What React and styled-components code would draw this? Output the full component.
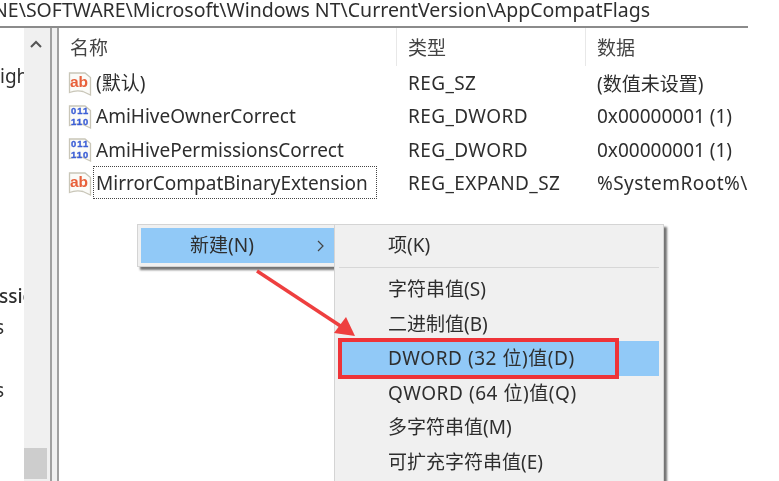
import React from "react";
import styled, { createGlobalStyle } from "styled-components";

const Global = createGlobalStyle`
  html, body { margin: 0; padding: 0; background: #fff; }
  body { font-family: "Noto Sans", "Noto Sans CJK SC", sans-serif; }
`;

const Stage = styled.div`
  position: relative;
  width: 779px;
  height: 481px;
  overflow: hidden;
  background: #fff;
  color: #2e2e2e;
  font-size: 19px;
  filter: blur(0.6px);
`;

const PathBar = styled.div`
  width: 748px;
  height: 28px;
  box-sizing: border-box;
  border-bottom: 2px solid #8b8b8b;
  display: flex;
  justify-content: flex-end;
  align-items: center;
  white-space: nowrap;
  overflow: hidden;
  font-size: 19.5px;
  line-height: 20px;
  padding: 0 98px 7px 0;
`;

const Panes = styled.div`
  display: flex;
  height: 453px;
`;

const Tree = styled.div`
  width: 50px;
  flex: none;
  display: flex;
  border-right: 2px solid #a0a0a0;
`;

const TreeLabels = styled.div`
  width: 24px;
  flex: none;
  overflow: hidden;
  padding-top: 33px;
  display: flex;
  flex-direction: column;
`;

const TreeRow = styled.div`
  height: 31.4px;
  flex: none;
  line-height: 31.4px;
  white-space: nowrap;
  margin-left: ${(p) => p.$x || 0}px;
  font-weight: ${(p) => (p.$bold ? 500 : 400)};
`;

const ScrollBar = styled.div`
  width: 26px;
  flex: none;
  background: #f0f0f0;
  display: flex;
  flex-direction: column;
  justify-content: space-between;
`;

const ScrollUp = styled.div`
  height: 36px;
  display: flex;
  justify-content: center;
  padding: 12px 3px 0 0;
  box-sizing: border-box;
`;

const ScrollThumb = styled.div`
  width: 23px;
  height: 31px;
  margin-bottom: 2px;
  background: #cdcdcd;
`;

const Gap = styled.div`
  width: 5px;
  flex: none;
  background: #f0f0f0;
  border-right: 2px solid #a0a0a0;
`;

const List = styled.div`
  width: 689px;
  flex: none;
  overflow: hidden;
  background: #fff;
`;

const Columns = "338px 189px 162px";

const Header = styled.div`
  display: grid;
  grid-template-columns: ${Columns};
  height: 38px;
`;

const HeaderCell = styled.div`
  padding-left: 11px;
  border-right: 1px solid ${(p) => (p.$last ? "transparent" : "#e8e8e8")};
  line-height: 40px;
  height: 38px;
  color: #444;
`;

const Rows = styled.div`
  display: flex;
  flex-direction: column;
`;

const Row = styled.div`
  display: grid;
  grid-template-columns: ${Columns};
  height: 33.3px;
  align-items: center;
  white-space: nowrap;
`;

const NameCell = styled.div`
  display: flex;
  align-items: center;
  padding-left: 9px;
  gap: 2px;
`;

const NameText = styled.span`
  display: inline-block;
  line-height: 33px;
  height: 33px;
  box-sizing: border-box;
  padding: 0 8px 0 2px;
  margin-left: -1px;
  border: 1px dotted ${(p) => (p.$focus ? "#444" : "transparent")};
`;

const Cell = styled.div`
  padding: 1px 0 0 11px;
  overflow: hidden;
  letter-spacing: ${(p) => p.$spacing || 0}px;
`;

const Menu = styled.div`
  position: absolute;
  box-sizing: border-box;
  background: #f0f0f0;
  border: 1px solid #d4d4d4;
  box-shadow: 3px 3px 2px rgba(70, 70, 70, 0.75);
`;

const ParentMenu = styled(Menu)`
  left: 137px;
  top: 224px;
  width: 198px;
  height: 43px;
  padding: 3px 0 0 3px;
`;

const SubMenu = styled(Menu)`
  left: 334px;
  top: 224px;
  width: 330px;
  height: 270px;
  padding: 2px 4px;
`;

const ParentItem = styled.div`
  height: 35px;
  background: #91c9f7;
  display: flex;
  align-items: center;
  justify-content: space-between;
  padding: 0 9px 0 49px;
  line-height: 35px;
`;

const MenuItem = styled.div`
  height: ${(p) => p.$h || 34.6}px;
  line-height: ${(p) => p.$h || 34.6}px;
  padding-left: 49px;
  white-space: nowrap;
  letter-spacing: ${(p) => (p.$wide ? 0.55 : 0)}px;
  background: ${(p) => (p.$active ? "#91c9f7" : "transparent")};
`;

const MenuSep = styled.div`
  height: 1px;
  margin: 4px 0;
  background: #d7d7d7;
`;

const Highlight = styled.div`
  position: absolute;
  left: 338px;
  top: 338px;
  width: 281px;
  height: 41px;
  box-sizing: border-box;
  border: 4px solid #ee3338;
`;

const Arrow = styled.svg`
  position: absolute;
  left: 250px;
  top: 265px;
`;

const PageIcon = ({ children }) => (
  <svg width="24" height="26" viewBox="0 0 24 26" style={{ flex: "none" }}>
    <path d="M1.5 3 H17 L22.5 7.5 V25 L15 21.5 Q8 20 1.5 22.5 Z" fill="#fbfbf8" stroke="#c9c6b8" strokeWidth="1.3" />
    {children}
  </svg>
);

const AbIcon = () => (
  <PageIcon>
    <text x="2" y="16.5" fontFamily="Liberation Sans" fontWeight="700" fontSize="15.5" fill="#e8603a">ab</text>
  </PageIcon>
);

const BinIcon = () => (
  <PageIcon>
    <text x="3" y="11" fontFamily="Liberation Sans" fontWeight="700" fontSize="9.4" fill="#3c5fd6" stroke="#3c5fd6" strokeWidth="0.35" letterSpacing="1">011</text>
    <text x="3" y="21.5" fontFamily="Liberation Sans" fontWeight="700" fontSize="9.4" fill="#3c5fd6" stroke="#3c5fd6" strokeWidth="0.35" letterSpacing="1">110</text>
  </PageIcon>
);

const rows = [
  { icon: <AbIcon />, name: "(默认)", type: "REG_SZ", data: "(数值未设置)" },
  { icon: <BinIcon />, name: "AmiHiveOwnerCorrect", type: "REG_DWORD", data: "0x00000001 (1)" },
  { icon: <BinIcon />, name: "AmiHivePermissionsCorrect", type: "REG_DWORD", data: "0x00000001 (1)" },
  { icon: <AbIcon />, name: "MirrorCompatBinaryExtension", type: "REG_EXPAND_SZ", data: "%SystemRoot%\\", dataSpacing: 0.45, focus: true },
];

export default function App() {
  return (
    <Stage>
      <Global />
      <PathBar>HINE\SOFTWARE\Microsoft\Windows NT\CurrentVersion\AppCompatFlags</PathBar>
      <Panes>
        <Tree>
          <TreeLabels>
            <TreeRow>igh</TreeRow>
            <TreeRow />
            <TreeRow />
            <TreeRow />
            <TreeRow />
            <TreeRow />
            <TreeRow />
            <TreeRow $bold $x={-1}>ssions</TreeRow>
            <TreeRow $x={-5}>s</TreeRow>
            <TreeRow />
            <TreeRow $x={-5}>s</TreeRow>
          </TreeLabels>
          <ScrollBar>
            <ScrollUp>
              <svg width="14" height="9" viewBox="0 0 14 9">
                <path d="M2 7 L7 2 L12 7" fill="none" stroke="#555" strokeWidth="2" />
              </svg>
            </ScrollUp>
            <ScrollThumb />
          </ScrollBar>
        </Tree>
        <Gap />
        <List>
          <Header>
            <HeaderCell>名称</HeaderCell>
            <HeaderCell>类型</HeaderCell>
            <HeaderCell $last>数据</HeaderCell>
          </Header>
          <Rows>
            {rows.map((r) => (
              <Row key={r.name}>
                <NameCell>
                  {r.icon}
                  <NameText $focus={r.focus}>{r.name}</NameText>
                </NameCell>
                <Cell $spacing={0.4}>{r.type}</Cell>
                <Cell $spacing={r.dataSpacing}>{r.data}</Cell>
              </Row>
            ))}
          </Rows>
        </List>
      </Panes>

      <ParentMenu>
        <ParentItem>
          <span>新建(N)</span>
          <svg width="9" height="12" viewBox="0 0 9 12">
            <path d="M2 1 L7 6 L2 11" fill="none" stroke="#444" strokeWidth="1.2" />
          </svg>
        </ParentItem>
      </ParentMenu>
      <SubMenu>
        <MenuItem $h={36}>项(K)</MenuItem>
        <MenuSep />
        <MenuItem>字符串值(S)</MenuItem>
        <MenuItem>二进制值(B)</MenuItem>
        <MenuItem $active $wide>DWORD (32 位)值(D)</MenuItem>
        <MenuItem $wide>QWORD (64 位)值(Q)</MenuItem>
        <MenuItem>多字符串值(M)</MenuItem>
        <MenuItem>可扩充字符串值(E)</MenuItem>
      </SubMenu>
      <Highlight />
      <Arrow width="112" height="80" viewBox="0 0 112 80">
        <path d="M7 6 L92 62" stroke="#ee3f3f" strokeWidth="3.5" fill="none" />
        <path d="M105 71 L84 68 L96 52 Z" fill="#ee3f3f" />
      </Arrow>
    </Stage>
  );
}
